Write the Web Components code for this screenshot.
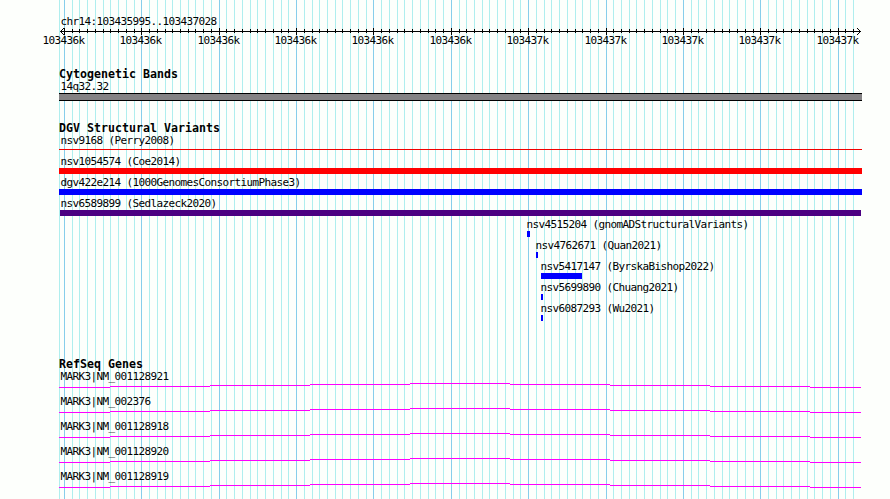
<!DOCTYPE html>
<html lang="en">
<head>
    <meta charset="UTF-8">
    <title>chr14:103435995..103437028</title>
    <style>
        body {
            margin: 0;
            overflow: hidden;
            background: #fdfffc;
            color: #000;
            font: 11px/13px "DejaVu Sans Mono", monospace;
        }
    </style>
</head>
<body>
<genome-browser>
    <genome-grid slot="grid"></genome-grid>
    <genome-ruler>chr14:103435995..103437028</genome-ruler>
    <genome-track name="Cytogenetic Bands" style="height: 54px">
        <band-row>14q32.32</band-row>
    </genome-track>
    <genome-track name="DGV Structural Variants" style="height: 236px">
        <variant-row from="59" to="862" color="#f00000" thin>nsv9168 (Perry2008)</variant-row>
        <variant-row from="59" to="862" color="#ff0000">nsv1054574 (Coe2014)</variant-row>
        <variant-row from="59" to="862" color="#0000ff">dgv422e214 (1000GenomesConsortiumPhase3)</variant-row>
        <variant-row from="60" to="861" color="#4b0082">nsv6589899 (Sedlazeck2020)</variant-row>
        <variant-row from="527" to="530" color="#0000ff">nsv4515204 (gnomADStructuralVariants)</variant-row>
        <variant-row from="536" to="538" color="#0000ff">nsv4762671 (Quan2021)</variant-row>
        <variant-row from="541" to="582" color="#0000ff">nsv5417147 (ByrskaBishop2022)</variant-row>
        <variant-row from="541" to="543" color="#0000ff">nsv5699890 (Chuang2021)</variant-row>
        <variant-row from="541" to="543" color="#0000ff">nsv6087293 (Wu2021)</variant-row>
    </genome-track>
    <genome-track name="RefSeq Genes">
        <gene-row>MARK3|NM_001128921</gene-row>
        <gene-row>MARK3|NM_002376</gene-row>
        <gene-row>MARK3|NM_001128918</gene-row>
        <gene-row>MARK3|NM_001128920</gene-row>
        <gene-row>MARK3|NM_001128919</gene-row>
    </genome-track>
</genome-browser>
</body>
<script>
    // one tick is 10 bp, 1034 bp are drawn on 800px
    const tickX = i => Math.floor(64.45 + i * 8000 / 1034)
    const TICKS = 103

    // monospace text squeezed to a 6px cell
    const label = `font: 11px/13px "DejaVu Sans Mono", monospace; letter-spacing: -0.622px;`

    class GenomeBrowser extends HTMLElement {
      constructor() {
        super()
        this.attachShadow({mode: 'open'})
        this.shadowRoot.innerHTML = `
          <style>
            :host { display: grid; width: 890px; height: 499px; overflow: hidden }
            ::slotted(genome-grid) { grid-area: 1 / 1 }
            .tracks { grid-area: 1 / 1; display: flex; flex-direction: column; min-width: 0; z-index: 1 }
          </style>
          <slot name="grid"></slot>
          <div class="tracks"><slot></slot></div>`
      }
    }

    class GenomeGrid extends HTMLElement {
      constructor() {
        super()
        this.attachShadow({mode: 'open'})
        let lines = '<rect x="59" width="1" height="499" fill="#afeeee"/>'
        for (let i = 0; i < TICKS; i++) {
          lines += `<rect x="${tickX(i)}" width="1" height="499" fill="${i % 10 ? '#afeeee' : '#87ceeb'}"/>`
        }
        this.shadowRoot.innerHTML = `
          <style>:host, svg { display: block }</style>
          <svg width="890" height="499">${lines}</svg>`
      }
    }

    class GenomeRuler extends HTMLElement {
      constructor() {
        super()
        this.attachShadow({mode: 'open'})
        let ticks = ''
        for (let i = 0; i < TICKS; i++) {
          const x = tickX(i)
          if (i % 10) {
            ticks += `<rect x="${x}" y="2" width="1" height="4"/>`
          } else {
            ticks += `<rect x="${x}" y="1" width="1" height="7"/>`
            ticks += `<text x="${x - 21.6}" y="17">${i < 60 ? '103436k' : '103437k'}</text>`
          }
        }
        this.shadowRoot.innerHTML = `
          <style>
            :host { display: block; height: 52px; padding-top: 15px }
            .region { height: 12px; padding-left: 60.4px; ${label} }
            svg { display: block }
            text { ${label} }
            path { fill: none; stroke: #000 }
          </style>
          <div class="region"><slot></slot></div>
          <svg width="890" height="24">
            <rect x="60" y="4" width="801" height="1"/>
            <path d="M64 1L60.5 4.5L64 8M857 1L860.5 4.5L857 8"/>
            ${ticks}
          </svg>`
      }
    }

    class GenomeTrack extends HTMLElement {
      constructor() {
        super()
        this.attachShadow({mode: 'open'})
        this.shadowRoot.innerHTML = `
          <style>
            :host { display: flex; flex-direction: column; flex: none }
            h2 { margin: 0; padding: 1px 0 0 59px; height: 12px; font: bold 11.6px/13px "DejaVu Sans Mono", monospace; letter-spacing: 0.016px }
          </style>
          <h2>${this.getAttribute('name')}</h2>
          <slot></slot>`
      }
    }

    class BandRow extends HTMLElement {
      constructor() {
        super()
        this.attachShadow({mode: 'open'})
        this.shadowRoot.innerHTML = `
          <style>
            :host { display: block; ${label} }
            .name { height: 13px; padding-left: 60.4px }
            .band { box-sizing: border-box; width: 803px; height: 8px; margin-left: 59px; background: #848284; border: solid #000; border-width: 1px 0 }
          </style>
          <div class="name"><slot></slot></div>
          <div class="band"></div>`
      }
    }

    class VariantRow extends HTMLElement {
      constructor() {
        super()
        this.attachShadow({mode: 'open'})
        const from = +this.getAttribute('from')
        const to = +this.getAttribute('to')
        const thin = this.hasAttribute('thin')
        this.shadowRoot.innerHTML = `
          <style>
            :host { display: block; height: 21px; ${label} }
            .name { height: ${thin ? 15 : 13}px; padding-left: ${Math.max(from - 0.6, 60.4)}px }
            .bar { width: ${to - from}px; height: ${thin ? 1 : 6}px; margin-left: ${from}px; background: ${this.getAttribute('color')} }
          </style>
          <div class="name"><slot></slot></div>
          <div class="bar"></div>`
      }
    }

    class GeneRow extends HTMLElement {
      constructor() {
        super()
        this.attachShadow({mode: 'open'})
        // the intron line climbs and falls 1px every 100px
        const edges = [59, 110, 210, 310, 410, 510, 610, 710, 810, 861]
        let steps = ''
        for (let i = 0; i < 9; i++) {
          steps += `<rect x="${edges[i]}" y="${Math.abs(4 - i)}" width="${edges[i + 1] - edges[i]}" height="1"/>`
        }
        this.shadowRoot.innerHTML = `
          <style>
            :host { display: block; height: 25px; ${label} }
            .name { height: 13px; padding-left: 60.4px }
            svg { display: block; fill: #ff00ff }
          </style>
          <div class="name"><slot></slot></div>
          <svg width="890" height="5">${steps}</svg>`
      }
    }

    window.customElements.define('genome-browser', GenomeBrowser)
    window.customElements.define('genome-grid', GenomeGrid)
    window.customElements.define('genome-ruler', GenomeRuler)
    window.customElements.define('genome-track', GenomeTrack)
    window.customElements.define('band-row', BandRow)
    window.customElements.define('variant-row', VariantRow)
    window.customElements.define('gene-row', GeneRow)
</script>
</html>
